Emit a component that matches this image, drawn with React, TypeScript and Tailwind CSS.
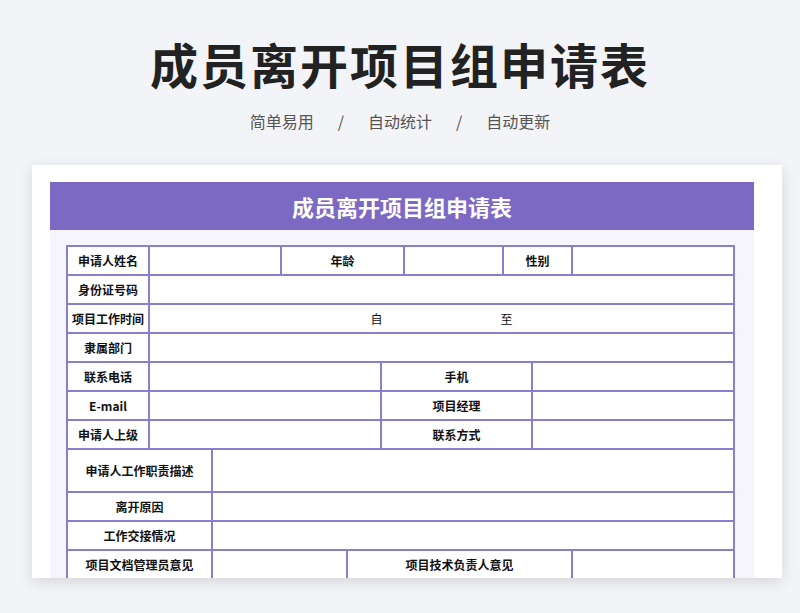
const B = 'border-[#8a7fcf]';

function Cell({ w, label, children, className = '' }: { w: string; label?: boolean; children?: React.ReactNode; className?: string }) {
  return (
    <div className={`${w} shrink-0 border-r-2 ${B} flex items-center justify-center text-[12px] text-[#111] ${label ? 'font-bold' : ''} ${className}`}>
      {children}
    </div>
  );
}

function Row({ h = 'h-[29px]', children }: { h?: string; children: React.ReactNode }) {
  return <div className={`flex ${h} border-b-2 ${B}`}>{children}</div>;
}

export default function App() {
  return (
    <div className="h-[613px] w-[800px] overflow-hidden bg-[#f3f4f7]" style={{ fontFamily: '"Noto Sans CJK SC", "Noto Sans", sans-serif' }}>
      <h1 className="pt-[28px] text-center text-[48px] font-bold leading-[70px] tracking-[2px] text-[#222]">成员离开项目组申请表</h1>
      <div className="mt-[11px] flex justify-center gap-[24px] text-[16px] text-[#555]">
        <span>简单易用</span><span>/</span><span>自动统计</span><span>/</span><span>自动更新</span>
      </div>
      <div className="ml-[32px] mt-[32px] h-[413px] w-[750px] overflow-hidden bg-white pt-[17px] shadow-[0_4px_14px_rgba(0,0,0,0.12)]">
        <div className="ml-[18px] h-full w-[704px] bg-[#f6f5fd]">
          <div className="flex h-[48px] items-center justify-center bg-[#7b69c3] text-[22px] font-bold text-white">成员离开项目组申请表</div>
          <div className={`ml-[16px] mt-[15px] w-[669px] border-l-2 border-t-2 ${B} bg-white`}>
            <Row>
              <Cell w="w-[82px]" label>申请人姓名</Cell>
              <Cell w="w-[132px]" />
              <Cell w="w-[123px]" label>年龄</Cell>
              <Cell w="w-[99px]" />
              <Cell w="w-[69px]" label>性别</Cell>
              <Cell w="w-[162px]" />
            </Row>
            <Row>
              <Cell w="w-[82px]" label>身份证号码</Cell>
              <Cell w="w-[585px]" />
            </Row>
            <Row>
              <Cell w="w-[82px]" label>项目工作时间</Cell>
              <Cell w="w-[585px]" className="gap-[118px]"><span>自</span><span>至</span></Cell>
            </Row>
            <Row>
              <Cell w="w-[82px]" label>隶属部门</Cell>
              <Cell w="w-[585px]" />
            </Row>
            {[['联系电话', '手机'], ['E-mail', '项目经理'], ['申请人上级', '联系方式']].map(([a, b]) => (
              <Row key={a}>
                <Cell w="w-[82px]" label>{a}</Cell>
                <Cell w="w-[232px]" />
                <Cell w="w-[151px]" label>{b}</Cell>
                <Cell w="w-[202px]" />
              </Row>
            ))}
            <Row h="h-[43px]">
              <Cell w="w-[145px]" label>申请人工作职责描述</Cell>
              <Cell w="w-[522px]" />
            </Row>
            <Row>
              <Cell w="w-[145px]" label>离开原因</Cell>
              <Cell w="w-[522px]" />
            </Row>
            <Row>
              <Cell w="w-[145px]" label>工作交接情况</Cell>
              <Cell w="w-[522px]" />
            </Row>
            <Row>
              <Cell w="w-[145px]" label>项目文档管理员意见</Cell>
              <Cell w="w-[135px]" />
              <Cell w="w-[225px]" label>项目技术负责人意见</Cell>
              <Cell w="w-[162px]" />
            </Row>
          </div>
        </div>
      </div>
    </div>
  );
}
